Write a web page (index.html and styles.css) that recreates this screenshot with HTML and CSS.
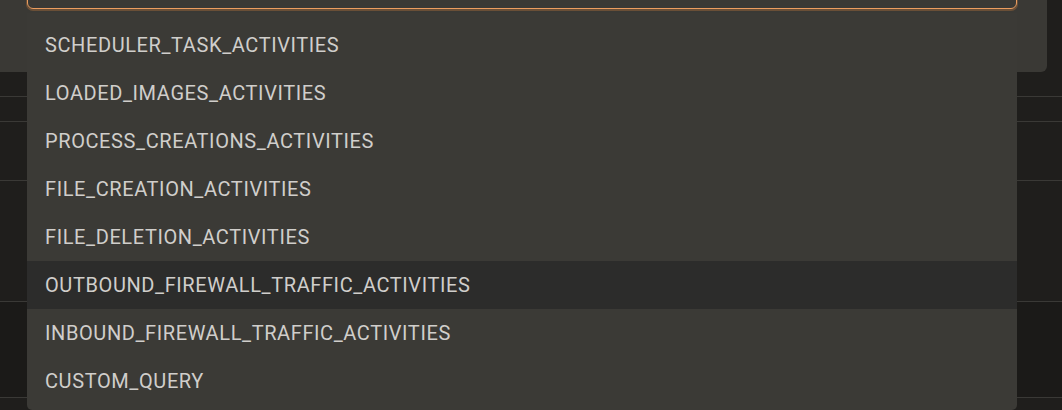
FILE: index.html
```html
<!DOCTYPE html>
<html lang="en">
<head>
    <meta charset="UTF-8">
    <meta name="viewport" content="width=device-width, initial-scale=1.0">
    <title>Query Type</title>
    <link rel="stylesheet" href="styles.css">
</head>
<body>
    <div class="page">
        <div class="dialog"></div>
        <div class="table">
            <div class="row head"></div>
            <div class="row small"></div>
            <div class="row mid"></div>
            <div class="row tall"></div>
            <div class="row tall dark"></div>
            <div class="row"></div>
        </div>
    </div>

    <div class="select">
        <div class="field"></div>
        <ul class="menu">
            <li>SCHEDULER_TASK_ACTIVITIES</li>
            <li>LOADED_IMAGES_ACTIVITIES</li>
            <li>PROCESS_CREATIONS_ACTIVITIES</li>
            <li>FILE_CREATION_ACTIVITIES</li>
            <li>FILE_DELETION_ACTIVITIES</li>
            <li class="hover">OUTBOUND_FIREWALL_TRAFFIC_ACTIVITIES</li>
            <li>INBOUND_FIREWALL_TRAFFIC_ACTIVITIES</li>
            <li>CUSTOM_QUERY</li>
        </ul>
    </div>
</body>
</html>
```

FILE: styles.css
```css
body {
    margin: 0;
    background-color: #1f1e1c;
    font-family: Roboto, "Liberation Sans", sans-serif;
    overflow: hidden;
    height: 410px;
}

.page {
    display: flex;
    flex-direction: column;
}

.dialog {
    width: 1047px;
    height: 72px;
    background-color: #3a3935;
    border-bottom-right-radius: 6px;
}

.table {
    display: flex;
    flex-direction: column;
}

.row {
    height: 24px;
    border-bottom: 1px solid #3a3936;
}

.row.small {
    height: 24px;
}

.row.mid {
    height: 58px;
}

.row.tall {
    height: 120px;
}

.row.dark {
    height: 95px;
    background-color: #1b1a18;
}

/* dropdown on top of the dialog */
.select {
    position: absolute;
    top: 0;
    left: 27px;
    width: 990px;
}

.field {
    position: absolute;
    top: -30px;
    left: 0;
    right: 0;
    height: 37px;
    border: 1px solid #eb9d5f;
    border-radius: 6px;
    box-shadow: 0 1px 0 1px #6a4f37;
}

.menu {
    list-style: none;
    margin: 0;
    padding: 8px 0 5px;
    position: absolute;
    top: 13px;
    left: 0;
    right: 0;
    background-color: #3b3a36;
    border-radius: 0 0 5px 5px;
}

.menu li {
    height: 48px;
    line-height: 48px;
    padding-left: 18px;
    font-size: 20px;
    letter-spacing: 0.6px;
    color: #d0cecb;
}

.menu li.hover {
    background-color: #2c2c2b;
}
```
